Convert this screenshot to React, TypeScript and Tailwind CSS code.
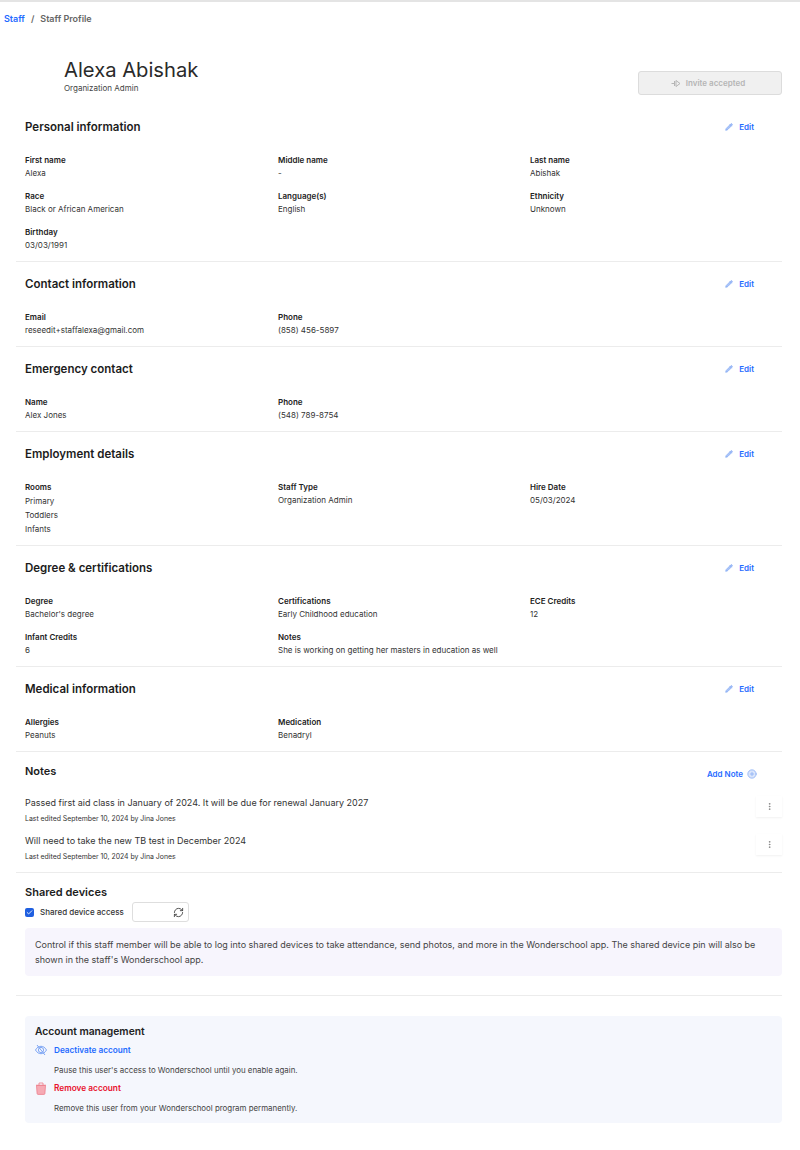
import { Check, CirclePlus, EllipsisVertical, Pencil, RefreshCw } from 'lucide-react';

type Field = { label: string; value: string | string[] };

const Info = ({ field }: { field: Field }) => {
  return (
    <div>
      <div className="text-[8px] leading-[13px] font-semibold text-[#222]">{field.label}</div>
      {Array.isArray(field.value) ? (
        field.value.map((line) => (
          <div key={line} className="text-[8px] leading-[14px] text-[#333]">{line}</div>
        ))
      ) : (
        <div className="text-[8px] leading-[13px] text-[#333]">{field.value}</div>
      )}
    </div>
  );
};

const Section = ({ title, fields }: { title: string; fields: Field[] }) => {
  return (
    <section className="border-b border-[#ececec] pl-[9px] pt-[15px] pb-[9px]">
      <div className="flex h-4 items-center justify-between">
        <h2 className="text-[11.5px] font-semibold text-[#1c1c1c]">{title}</h2>
        <a className="mr-7 mb-[3px] flex items-center gap-[6px] text-[8px] font-semibold text-[#1f6bff]">
          <Pencil size={8} className="text-[#7ea6f5]" fill="#a9c4f8" />
          Edit
        </a>
      </div>
      <div className="mt-[18px] grid grid-cols-[253px_252px_1fr] gap-y-[10px]">
        {fields.map((field) => (
          <Info key={field.label} field={field} />
        ))}
      </div>
    </section>
  );
};

const Note = ({ text }: { text: string }) => {
  return (
    <div className="flex h-[38px] items-start justify-between">
      <div>
        <div className="text-[9px] leading-[14px] text-[#333]">{text}</div>
        <div className="mt-[4px] text-[6.9px] leading-[10px] text-[#333]">Last edited September 10, 2024 by Jina Jones</div>
      </div>
      <button className="flex h-[21px] w-[26px] items-center justify-center bg-white shadow-[0_1px_2px_rgba(0,0,0,0.06)]">
        <EllipsisVertical size={9} className="text-[#777]" />
      </button>
    </div>
  );
};

const sections: { title: string; fields: Field[] }[] = [
  {
    title: 'Personal information',
    fields: [
      { label: 'First name', value: 'Alexa' },
      { label: 'Middle name', value: '-' },
      { label: 'Last name', value: 'Abishak' },
      { label: 'Race', value: 'Black or African American' },
      { label: 'Language(s)', value: 'English' },
      { label: 'Ethnicity', value: 'Unknown' },
      { label: 'Birthday', value: '03/03/1991' },
    ],
  },
  {
    title: 'Contact information',
    fields: [
      { label: 'Email', value: 'reseedit+staffalexa@gmail.com' },
      { label: 'Phone', value: '(858) 456-5897' },
    ],
  },
  {
    title: 'Emergency contact',
    fields: [
      { label: 'Name', value: 'Alex Jones' },
      { label: 'Phone', value: '(548) 789-8754' },
    ],
  },
  {
    title: 'Employment details',
    fields: [
      { label: 'Rooms', value: ['Primary', 'Toddlers', 'Infants'] },
      { label: 'Staff Type', value: 'Organization Admin' },
      { label: 'Hire Date', value: '05/03/2024' },
    ],
  },
  {
    title: 'Degree & certifications',
    fields: [
      { label: 'Degree', value: "Bachelor's degree" },
      { label: 'Certifications', value: 'Early Childhood education' },
      { label: 'ECE Credits', value: '12' },
      { label: 'Infant Credits', value: '6' },
      { label: 'Notes', value: 'She is working on getting her masters in education as well' },
    ],
  },
  {
    title: 'Medical information',
    fields: [
      { label: 'Allergies', value: 'Peanuts' },
      { label: 'Medication', value: 'Benadryl' },
    ],
  },
];

const App = () => {
  return (
    <div className="min-h-[1150px] border-t-2 border-[#e4e4e4] bg-white font-['Inter',sans-serif]">
      <nav className="flex h-[33px] items-center gap-[6px] pl-1 text-[9px] font-semibold text-[#666]">
        <a className="text-[#1f6bff]">Staff</a>
        <span>/</span>
        <span>Staff Profile</span>
      </nav>

      <main className="ml-4 w-[766px]">
        <header className="flex h-[70px] items-start justify-between pl-12 pt-[22px]">
          <div>
            <h1 className="text-[20.2px] leading-[26px] text-[#2a2a2a]">Alexa Abishak</h1>
            <div className="text-[8px] leading-[10px] text-[#444]">Organization Admin</div>
          </div>
          <button className="mt-[14px] flex h-[24px] w-[144px] items-center justify-center gap-[5px] rounded-[3px] border border-[#dcdcdc] bg-[#f0f0f0] pr-1 text-[8px] font-semibold text-[#b5b5b5]">
            <svg width="10" height="9" viewBox="0 0 10 9" fill="none" stroke="currentColor" strokeWidth="1">
              <path d="M0.5 4.5H3M3.5 2v5M5 1.5l4 3-4 3z" />
            </svg>
            Invite accepted
          </button>
        </header>

        {sections.map((section) => (
          <Section key={section.title} title={section.title} fields={section.fields} />
        ))}

        <section className="border-b border-[#ececec] pl-[9px] pt-[11px]">
          <div className="flex h-4 items-center justify-between">
            <h2 className="text-[11px] font-semibold text-[#1c1c1c]">Notes</h2>
            <a className="mt-[6px] mr-[25px] flex items-center gap-[4px] text-[8px] font-semibold text-[#1f6bff]">
              Add Note
              <CirclePlus size={10} className="text-[#8fb2f5]" fill="#dbe6fb" />
            </a>
          </div>
          <div className="mt-[17px]">
            <Note text="Passed first aid class in January of 2024. It will be due for renewal January 2027" />
            <Note text="Will need to take the new TB test in December 2024" />
          </div>
        </section>

        <section className="border-b border-[#ececec] pl-[9px] pt-[11px] pb-[19px]">
          <h2 className="text-[11px] leading-4 font-semibold text-[#1c1c1c]">Shared devices</h2>
          <div className="mt-[2px] flex h-5 items-center">
            <span className="flex h-[9px] w-[9px] items-center justify-center rounded-[2px] bg-[#1f5fe0]">
              <Check size={7} strokeWidth={3} className="text-white" />
            </span>
            <span className="ml-[6px] w-[92px] text-[8px] font-medium text-[#333]">Shared device access</span>
            <div className="flex h-5 w-[57px] items-center justify-end rounded-[3px] border border-[#dedede] pr-1">
              <RefreshCw size={11} className="text-[#444]" />
            </div>
          </div>
          <p className="mt-[6px] h-[48px] rounded-[4px] bg-[#f7f5fd] py-[9px] pr-2 pl-[10px] text-[9px] leading-[15px] text-[#444]">
            Control if this staff member will be able to log into shared devices to take attendance, send photos, and more in the Wonderschool app. The shared device pin will also be shown in the staff's Wonderschool app.
          </p>
        </section>

        <section className="mt-5 ml-[9px] h-[107px] rounded-[4px] bg-[#f5f7fd] pt-[8px] pl-[10px]">
          <h2 className="text-[10.3px] leading-[14px] font-semibold text-[#222]">Account management</h2>
          <div className="mt-[4px] flex h-[16px] items-center gap-[7px] text-[8.2px] font-semibold text-[#1f6bff]">
            <svg width="12" height="12" viewBox="0 0 12 12" fill="none" stroke="#6f9cf3" strokeWidth="0.9">
              <path d="M0.5 6C2 3.4 3.8 2.3 6 2.3S10 3.4 11.5 6C10 8.6 8.2 9.7 6 9.7S2 8.6 0.5 6Z" />
              <circle cx="6" cy="6" r="2.6" />
              <path d="M2 1l8 10" />
            </svg>
            Deactivate account
          </div>
          <div className="mt-[7px] ml-[19px] text-[7.9px] leading-[10px] text-[#444]">Pause this user's access to Wonderschool until you enable again.</div>
          <div className="mt-[5px] flex h-[16px] items-center gap-[7px] text-[8.3px] font-semibold text-[#e8112d]">
            <svg width="12" height="13" viewBox="0 0 12 13" fill="#f6aab4" stroke="#ee7d8c" strokeWidth="0.8">
              <path d="M1.5 3.5h9l-.6 8a1 1 0 0 1-1 .9H3.1a1 1 0 0 1-1-.9z" />
              <path d="M1 3.2h10M4 3V1h4v2" fill="none" />
            </svg>
            Remove account
          </div>
          <div className="mt-[7px] ml-[19px] text-[7.9px] leading-[10px] text-[#444]">Remove this user from your Wonderschool program permanently.</div>
        </section>
      </main>
    </div>
  );
};

export default App;
